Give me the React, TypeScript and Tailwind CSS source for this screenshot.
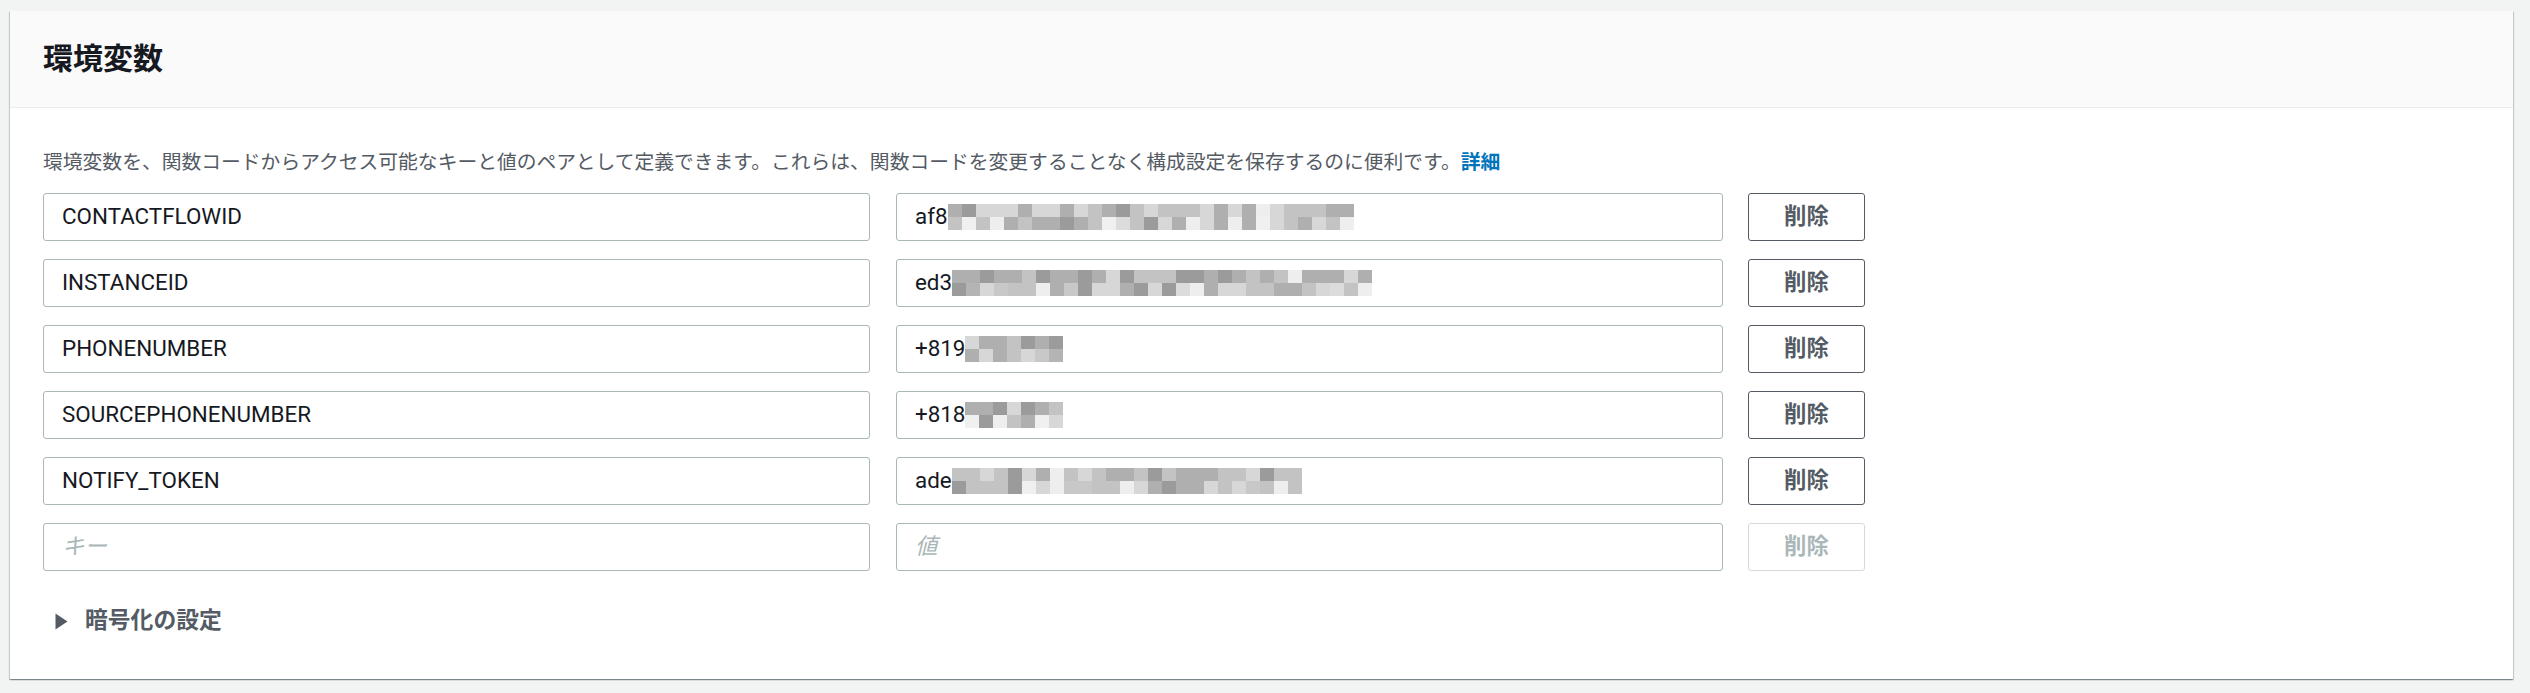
import React from "react";

const FONT = '"Roboto", "Noto Sans CJK JP", sans-serif';

function Mosaic({ width, seed }: { width: number; seed: number }) {
  const cell = 14;
  const cols = Math.floor(width / cell);
  const rects: React.ReactNode[] = [];
  let s = seed;
  const rnd = () => {
    s = (s * 9301 + 49297) % 233280;
    return s / 233280;
  };
  for (let r = 0; r < 2; r++) {
    for (let c = 0; c < cols; c++) {
      const v = rnd();
      let g: number;
      if (v < 0.1) g = 238;
      else if (v < 0.35) g = 215;
      else if (v < 0.62) g = 195;
      else if (v < 0.85) g = 175;
      else g = 155;
      if (r === 1 && rnd() < 0.25) g = Math.min(240, g + 25);
      rects.push(
        <rect
          key={`${r}-${c}`}
          x={c * cell}
          y={r * 13}
          width={cell}
          height={13}
          fill={`rgb(${g},${g},${g})`}
        />
      );
    }
  }
  return (
    <svg width={cols * cell} height={26} className="block">
      {rects}
    </svg>
  );
}

type Row = { key: string; prefix: string; blur: number; seed: number };

const rows: Row[] = [
  { key: "CONTACTFLOWID", prefix: "af8", blur: 406, seed: 11 },
  { key: "INSTANCEID", prefix: "ed3", blur: 420, seed: 37 },
  { key: "PHONENUMBER", prefix: "+819", blur: 98, seed: 73 },
  { key: "SOURCEPHONENUMBER", prefix: "+818", blur: 98, seed: 91 },
  { key: "NOTIFY_TOKEN", prefix: "ade", blur: 350, seed: 129 },
];

function Box({ children }: { children: React.ReactNode }) {
  return (
    <div className="flex h-[48px] w-[827px] items-center rounded-[3px] border border-[#aab7b8] bg-white pl-[18px]">
      {children}
    </div>
  );
}

function DeleteButton({ disabled }: { disabled?: boolean }) {
  return (
    <div
      className={
        disabled
          ? "ml-[25px] flex h-[48px] w-[117px] items-center justify-center rounded-[3px] border border-[#d5dbdb] bg-white text-[22.4px] font-bold text-[#aab7b8]"
          : "ml-[25px] flex h-[48px] w-[117px] items-center justify-center rounded-[3px] border border-[#545b64] bg-white text-[22.4px] font-bold text-[#545b64]"
      }
    >
      削除
    </div>
  );
}

export default function App() {
  return (
    <div
      className="min-h-screen bg-[#f2f3f3] pb-[15px] pl-[10px] pr-[17px] pt-[11px]"
      style={{ fontFamily: FONT }}
    >
      <div className="bg-white shadow-[0_1px_1px_0_rgba(0,28,36,0.3),1px_1px_1px_0_rgba(0,28,36,0.15),-1px_1px_1px_0_rgba(0,28,36,0.15)]">
        <div className="flex h-[97px] items-center border-b border-[#eaeded] bg-[#fafafa] pl-[33px]">
          <h2 className="text-[30px] font-bold leading-none text-[#16191f]">環境変数</h2>
        </div>
        <div className="pb-[42px] pl-[33px] pt-[41px]">
          <p className="text-[19.8px] leading-[28px] text-[#545b64]">
            環境変数を、関数コードからアクセス可能なキーと値のペアとして定義できます。これらは、関数コードを変更することなく構成設定を保存するのに便利です。
            <span className="font-bold text-[#0073bb]">詳細</span>
          </p>
          <div className="mt-[16px] flex flex-col gap-[18px]">
            {rows.map((r) => (
              <div key={r.key} className="flex items-center">
                <Box>
                  <span className="text-[22.4px] text-[#16191f]">{r.key}</span>
                </Box>
                <div className="ml-[26px]">
                  <Box>
                    <span className="text-[22.4px] text-[#16191f]">{r.prefix}</span>
                    <Mosaic width={r.blur} seed={r.seed} />
                  </Box>
                </div>
                <DeleteButton />
              </div>
            ))}
            <div className="flex items-center">
              <Box>
                <span className="text-[22.4px] italic text-[#aab7b8]">キー</span>
              </Box>
              <div className="ml-[26px]">
                <Box>
                  <span className="text-[22.4px] italic text-[#aab7b8]">値</span>
                </Box>
              </div>
              <DeleteButton disabled />
            </div>
          </div>
          <div className="mt-[34px] flex h-[32px] items-center pl-[12px]">
            <svg width="13" height="17" viewBox="0 0 13 17" className="block">
              <path d="M0.5 0.5 L12.5 8.5 L0.5 16.5 Z" fill="#545b64" />
            </svg>
            <span className="ml-[17px] text-[22.8px] font-bold text-[#545b64]">暗号化の設定</span>
          </div>
        </div>
      </div>
    </div>
  );
}
